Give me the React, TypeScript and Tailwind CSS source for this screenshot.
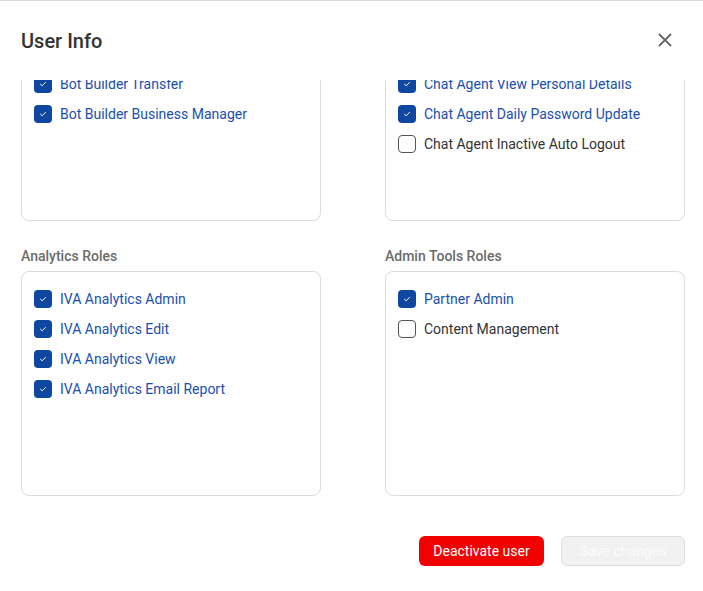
import React from "react";

type Item = { label: string; checked: boolean };
type Section = { title: string; items: Item[] };

const sections: Section[] = [
  {
    title: "Bot Builder Roles",
    items: [
      { label: "Bot Builder Admin", checked: true },
      { label: "Bot Builder Edit", checked: true },
      { label: "Bot Builder Transfer", checked: true },
      { label: "Bot Builder Business Manager", checked: true },
    ],
  },
  {
    title: "Chat Agent Roles",
    items: [
      { label: "Chat Agent Admin", checked: true },
      { label: "Chat Agent Supervisor", checked: true },
      { label: "Chat Agent View Personal Details", checked: true },
      { label: "Chat Agent Daily Password Update", checked: true },
      { label: "Chat Agent Inactive Auto Logout", checked: false },
    ],
  },
  {
    title: "Analytics Roles",
    items: [
      { label: "IVA Analytics Admin", checked: true },
      { label: "IVA Analytics Edit", checked: true },
      { label: "IVA Analytics View", checked: true },
      { label: "IVA Analytics Email Report", checked: true },
    ],
  },
  {
    title: "Admin Tools Roles",
    items: [
      { label: "Partner Admin", checked: true },
      { label: "Content Management", checked: false },
    ],
  },
];

function Check({ checked }: { checked: boolean }) {
  if (checked) {
    return (
      <span className="flex h-[18px] w-[18px] shrink-0 items-center justify-center rounded-[4px] bg-[#0d47a1]">
        <svg width="8" height="8" viewBox="0 0 8 8" fill="none">
          <path d="M1.5 4.2 L3.2 5.8 L6.5 2.4" stroke="white" strokeWidth="1" strokeLinecap="round" strokeLinejoin="round" />
        </svg>
      </span>
    );
  }
  return <span className="h-[18px] w-[18px] shrink-0 rounded-[4px] border-[1.5px] border-[#555]" />;
}

export default function App() {
  return (
    <div
      className="relative h-[591px] w-[703px] overflow-hidden border-t border-[#dcdcdc] bg-white"
      style={{ fontFamily: "Roboto, 'Liberation Sans', sans-serif" }}
    >
      <div className="flex h-[79px] items-center justify-between pl-[21px] pr-[31px]">
        <h1 className="text-[20px] font-medium text-[#333]">User Info</h1>
        <svg width="14" height="14" viewBox="0 0 14 14" fill="none" className="mb-[2px]">
          <path d="M1 1 L13 13 M13 1 L1 13" stroke="#666" strokeWidth="1.8" />
        </svg>
      </div>
      <div className="h-[436px] overflow-hidden pl-[21px]">
        <div className="mt-[-109px] grid grid-cols-[300px_300px] gap-x-[64px] gap-y-[25px]">
          {sections.map((s) => (
            <div key={s.title} className="flex flex-col">
              <div className="mb-[5px] h-[20px] text-[14px] font-medium leading-[20px] text-[#6b6b6b]">{s.title}</div>
              <div className="h-[225px] rounded-[8px] border border-[#dcdcdc] pl-[12px] pt-[12px]">
                {s.items.map((it) => (
                  <div key={it.label} className="flex h-[30px] items-center gap-[8px]">
                    <Check checked={it.checked} />
                    <span className={`text-[14px] ${it.checked ? "text-[#1a4fae]" : "text-[#333]"}`}>{it.label}</span>
                  </div>
                ))}
              </div>
            </div>
          ))}
        </div>
      </div>
      <div className="flex justify-end gap-[17px] pr-[18px] pt-[20px]">
        <button className="h-[30px] w-[125px] rounded-[6px] bg-[#f20000] text-[14px] text-white">Deactivate user</button>
        <button className="h-[30px] w-[124px] rounded-[6px] border border-[#dedede] bg-[#f1f1f1] text-[14px] text-[#fbfbfb]">
          Save changes
        </button>
      </div>
    </div>
  );
}
